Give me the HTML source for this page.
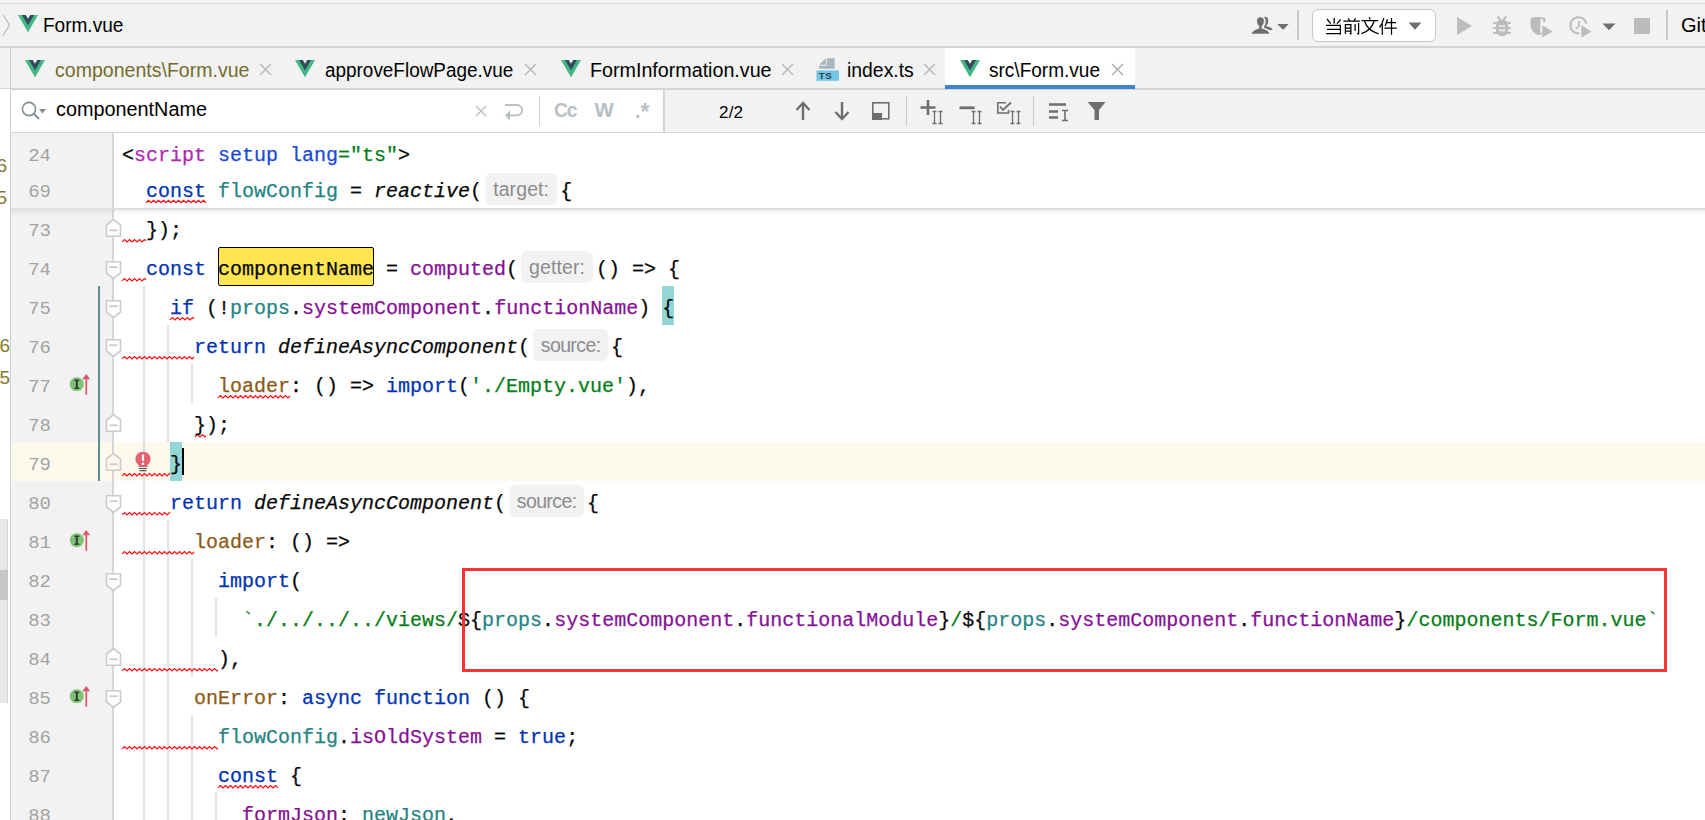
<!DOCTYPE html><html><head><meta charset="utf-8"><style>
*{margin:0;padding:0;box-sizing:border-box}
html,body{width:1705px;height:820px;overflow:hidden;background:#fff}
body{position:relative;font-family:"Liberation Sans",sans-serif}
.abs{position:absolute}
.ui{position:absolute;font-family:"Liberation Sans",sans-serif;font-size:19px;color:#000;white-space:pre;line-height:22px}
.cl{position:absolute;left:122px;height:39px;line-height:39px;font-family:"Liberation Mono",monospace;font-size:20px;white-space:pre;color:#080808;padding-top:3px;-webkit-text-stroke:0.25px currentColor}
.ln{position:absolute;left:12px;width:39px;text-align:right;height:39px;line-height:39px;font-family:"Liberation Mono",monospace;font-size:19px;color:#a3a3a3;padding-top:3.5px}
.hint{display:inline-block;width:78px;height:39px;vertical-align:top;position:relative}
.hint span{position:absolute;left:3px;right:3px;top:1px;height:32px;line-height:32px;border-radius:6px;background:#f2f2f2;color:#8c8c8c;font-family:"Liberation Sans",sans-serif;font-size:19.5px;text-align:center;letter-spacing:0.1px;-webkit-text-stroke:0}
</style></head><body><div class="abs" style="left:0;top:0;width:1705px;height:133px;background:#f2f2f2"></div>
<div class="abs" style="left:0;top:3px;width:1705px;height:1px;background:#dadada"></div>
<div class="abs" style="left:0;top:46px;width:1705px;height:2px;background:#d4d4d4"></div>
<div class="abs" style="left:0;top:88px;width:1705px;height:2px;background:#d4d4d4"></div>
<div class="abs" style="left:11px;top:90px;width:653px;height:42px;background:#fff"></div>
<div class="abs" style="left:663px;top:90px;width:2px;height:42px;background:#d4d4d4"></div>
<div class="abs" style="left:0;top:132px;width:1705px;height:1px;background:#d4d4d4"></div>
<div class="abs" style="left:10px;top:47px;width:1px;height:773px;background:#cfcfcf"></div>
<div class="abs" style="left:11px;top:133px;width:101px;height:687px;background:#f2f2f2"></div>
<div class="abs" style="left:11px;top:442px;width:1694px;height:39px;background:#fcfaed"></div>
<div class="abs" style="left:112px;top:133px;width:2px;height:687px;background:#d6d6d6"></div>
<div class="abs" style="left:11px;top:208px;width:1694px;height:2px;background:#dedede"></div>
<div class="abs" style="left:143px;top:286px;width:2px;height:534px;background:#e2e2e2"></div>
<div class="abs" style="left:167px;top:325px;width:2px;height:117px;background:#e2e2e2"></div>
<div class="abs" style="left:167px;top:520px;width:2px;height:300px;background:#e2e2e2"></div>
<div class="abs" style="left:191px;top:364px;width:2px;height:39px;background:#e2e2e2"></div>
<div class="abs" style="left:191px;top:559px;width:2px;height:117px;background:#e2e2e2"></div>
<div class="abs" style="left:191px;top:715px;width:2px;height:105px;background:#e2e2e2"></div>
<div class="abs" style="left:215px;top:598px;width:2px;height:39px;background:#e2e2e2"></div>
<div class="abs" style="left:215px;top:793px;width:2px;height:27px;background:#e2e2e2"></div>
<div class="abs" style="left:98px;top:286px;width:2px;height:195px;background:#5b8f8f"></div>
<svg class="abs" style="left:105px;top:217.8px" width="17" height="19" viewBox="0 0 17 19"><path d="M1.5 18.2H15.5V7L8.5 1.5L1.5 7Z" fill="#fff" stroke="#cbcbcb" stroke-width="1.6"/><path d="M4.5 12.3H12.5" stroke="#cbcbcb" stroke-width="1.8"/></svg>
<svg class="abs" style="left:105px;top:260.7px" width="17" height="19" viewBox="0 0 17 19"><path d="M1.5 0.8H15.5V12L8.5 17.5L1.5 12Z" fill="#fff" stroke="#cbcbcb" stroke-width="1.6"/><path d="M4.5 6.2H12.5" stroke="#cbcbcb" stroke-width="1.8"/></svg>
<svg class="abs" style="left:105px;top:299.7px" width="17" height="19" viewBox="0 0 17 19"><path d="M1.5 0.8H15.5V12L8.5 17.5L1.5 12Z" fill="#fff" stroke="#cbcbcb" stroke-width="1.6"/><path d="M4.5 6.2H12.5" stroke="#cbcbcb" stroke-width="1.8"/></svg>
<svg class="abs" style="left:105px;top:338.7px" width="17" height="19" viewBox="0 0 17 19"><path d="M1.5 0.8H15.5V12L8.5 17.5L1.5 12Z" fill="#fff" stroke="#cbcbcb" stroke-width="1.6"/><path d="M4.5 6.2H12.5" stroke="#cbcbcb" stroke-width="1.8"/></svg>
<svg class="abs" style="left:105px;top:412.8px" width="17" height="19" viewBox="0 0 17 19"><path d="M1.5 18.2H15.5V7L8.5 1.5L1.5 7Z" fill="#fff" stroke="#cbcbcb" stroke-width="1.6"/><path d="M4.5 12.3H12.5" stroke="#cbcbcb" stroke-width="1.8"/></svg>
<svg class="abs" style="left:105px;top:451.8px" width="17" height="19" viewBox="0 0 17 19"><path d="M1.5 18.2H15.5V7L8.5 1.5L1.5 7Z" fill="#fcfaed" stroke="#cbcbcb" stroke-width="1.6"/><path d="M4.5 12.3H12.5" stroke="#cbcbcb" stroke-width="1.8"/></svg>
<svg class="abs" style="left:105px;top:494.7px" width="17" height="19" viewBox="0 0 17 19"><path d="M1.5 0.8H15.5V12L8.5 17.5L1.5 12Z" fill="#fff" stroke="#cbcbcb" stroke-width="1.6"/><path d="M4.5 6.2H12.5" stroke="#cbcbcb" stroke-width="1.8"/></svg>
<svg class="abs" style="left:105px;top:572.7px" width="17" height="19" viewBox="0 0 17 19"><path d="M1.5 0.8H15.5V12L8.5 17.5L1.5 12Z" fill="#fff" stroke="#cbcbcb" stroke-width="1.6"/><path d="M4.5 6.2H12.5" stroke="#cbcbcb" stroke-width="1.8"/></svg>
<svg class="abs" style="left:105px;top:646.8px" width="17" height="19" viewBox="0 0 17 19"><path d="M1.5 18.2H15.5V7L8.5 1.5L1.5 7Z" fill="#fff" stroke="#cbcbcb" stroke-width="1.6"/><path d="M4.5 12.3H12.5" stroke="#cbcbcb" stroke-width="1.8"/></svg>
<svg class="abs" style="left:105px;top:689.7px" width="17" height="19" viewBox="0 0 17 19"><path d="M1.5 0.8H15.5V12L8.5 17.5L1.5 12Z" fill="#fff" stroke="#cbcbcb" stroke-width="1.6"/><path d="M4.5 6.2H12.5" stroke="#cbcbcb" stroke-width="1.8"/></svg>
<svg class="abs" style="left:68px;top:373px" width="26" height="24" viewBox="0 0 26 24"><circle cx="8.8" cy="11.2" r="7" fill="#80c377"/><path d="M6.3 7.3H11.3M6.3 15.2H11.3" stroke="#344434" stroke-width="1.6"/><path d="M8.8 7.3V15.2" stroke="#344434" stroke-width="2.2"/><path d="M18.3 21.8V5" stroke="#de5763" stroke-width="1.7"/><path d="M14.4 6.2L18.3 1L22.2 6.2Z" fill="#de5763"/></svg>
<svg class="abs" style="left:68px;top:529px" width="26" height="24" viewBox="0 0 26 24"><circle cx="8.8" cy="11.2" r="7" fill="#80c377"/><path d="M6.3 7.3H11.3M6.3 15.2H11.3" stroke="#344434" stroke-width="1.6"/><path d="M8.8 7.3V15.2" stroke="#344434" stroke-width="2.2"/><path d="M18.3 21.8V5" stroke="#de5763" stroke-width="1.7"/><path d="M14.4 6.2L18.3 1L22.2 6.2Z" fill="#de5763"/></svg>
<svg class="abs" style="left:68px;top:685px" width="26" height="24" viewBox="0 0 26 24"><circle cx="8.8" cy="11.2" r="7" fill="#80c377"/><path d="M6.3 7.3H11.3M6.3 15.2H11.3" stroke="#344434" stroke-width="1.6"/><path d="M8.8 7.3V15.2" stroke="#344434" stroke-width="2.2"/><path d="M18.3 21.8V5" stroke="#de5763" stroke-width="1.7"/><path d="M14.4 6.2L18.3 1L22.2 6.2Z" fill="#de5763"/></svg>
<svg class="abs" style="left:0;top:0;overflow:visible" width="1" height="1"><polyline points="146.00,202.70 148.50,200.30 151.00,202.70 153.50,200.30 156.00,202.70 158.50,200.30 161.00,202.70 163.50,200.30 166.00,202.70 168.50,200.30 171.00,202.70 173.50,200.30 176.00,202.70 178.50,200.30 181.00,202.70 183.50,200.30 186.00,202.70 188.50,200.30 191.00,202.70 193.50,200.30 196.00,202.70 198.50,200.30 201.00,202.70 203.50,200.30 206.00,202.70" fill="none" stroke="#ff0d0d" stroke-width="1.2"/></svg>
<svg class="abs" style="left:0;top:0;overflow:visible" width="1" height="1"><polyline points="122.00,241.90 124.50,239.50 127.00,241.90 129.50,239.50 132.00,241.90 134.50,239.50 137.00,241.90 139.50,239.50 142.00,241.90 144.50,239.50 146.00,240.94" fill="none" stroke="#ff0d0d" stroke-width="1.2"/></svg>
<svg class="abs" style="left:0;top:0;overflow:visible" width="1" height="1"><polyline points="122.00,280.90 124.50,278.50 127.00,280.90 129.50,278.50 132.00,280.90 134.50,278.50 137.00,280.90 139.50,278.50 142.00,280.90 144.50,278.50 146.00,279.94" fill="none" stroke="#ff0d0d" stroke-width="1.2"/></svg>
<svg class="abs" style="left:0;top:0;overflow:visible" width="1" height="1"><polyline points="170.00,319.90 172.50,317.50 175.00,319.90 177.50,317.50 180.00,319.90 182.50,317.50 185.00,319.90 187.50,317.50 190.00,319.90 192.50,317.50 194.00,318.94" fill="none" stroke="#ff0d0d" stroke-width="1.2"/></svg>
<svg class="abs" style="left:0;top:0;overflow:visible" width="1" height="1"><polyline points="122.00,358.90 124.50,356.50 127.00,358.90 129.50,356.50 132.00,358.90 134.50,356.50 137.00,358.90 139.50,356.50 142.00,358.90 144.50,356.50 147.00,358.90 149.50,356.50 152.00,358.90 154.50,356.50 157.00,358.90 159.50,356.50 162.00,358.90 164.50,356.50 167.00,358.90 169.50,356.50 172.00,358.90 174.50,356.50 177.00,358.90 179.50,356.50 182.00,358.90 184.50,356.50 187.00,358.90 189.50,356.50 192.00,358.90 194.00,356.98" fill="none" stroke="#ff0d0d" stroke-width="1.2"/></svg>
<svg class="abs" style="left:0;top:0;overflow:visible" width="1" height="1"><polyline points="218.00,397.90 220.50,395.50 223.00,397.90 225.50,395.50 228.00,397.90 230.50,395.50 233.00,397.90 235.50,395.50 238.00,397.90 240.50,395.50 243.00,397.90 245.50,395.50 248.00,397.90 250.50,395.50 253.00,397.90 255.50,395.50 258.00,397.90 260.50,395.50 263.00,397.90 265.50,395.50 268.00,397.90 270.50,395.50 273.00,397.90 275.50,395.50 278.00,397.90 280.50,395.50 283.00,397.90 285.50,395.50 288.00,397.90 290.00,395.98" fill="none" stroke="#ff0d0d" stroke-width="1.2"/></svg>
<svg class="abs" style="left:0;top:0;overflow:visible" width="1" height="1"><polyline points="195.00,436.90 197.50,434.50 200.00,436.90 202.50,434.50 205.00,436.90 206.00,435.94" fill="none" stroke="#ff0d0d" stroke-width="1.2"/></svg>
<svg class="abs" style="left:0;top:0;overflow:visible" width="1" height="1"><polyline points="122.00,475.90 124.50,473.50 127.00,475.90 129.50,473.50 132.00,475.90 134.50,473.50 137.00,475.90 139.50,473.50 142.00,475.90 144.50,473.50 147.00,475.90 149.50,473.50 152.00,475.90 154.50,473.50 157.00,475.90 159.50,473.50 162.00,475.90 164.50,473.50 167.00,475.90 169.50,473.50 170.00,473.98" fill="none" stroke="#ff0d0d" stroke-width="1.2"/></svg>
<svg class="abs" style="left:0;top:0;overflow:visible" width="1" height="1"><polyline points="122.00,514.90 124.50,512.50 127.00,514.90 129.50,512.50 132.00,514.90 134.50,512.50 137.00,514.90 139.50,512.50 142.00,514.90 144.50,512.50 147.00,514.90 149.50,512.50 152.00,514.90 154.50,512.50 157.00,514.90 159.50,512.50 162.00,514.90 164.50,512.50 167.00,514.90 169.50,512.50 170.00,512.98" fill="none" stroke="#ff0d0d" stroke-width="1.2"/></svg>
<svg class="abs" style="left:0;top:0;overflow:visible" width="1" height="1"><polyline points="122.00,553.90 124.50,551.50 127.00,553.90 129.50,551.50 132.00,553.90 134.50,551.50 137.00,553.90 139.50,551.50 142.00,553.90 144.50,551.50 147.00,553.90 149.50,551.50 152.00,553.90 154.50,551.50 157.00,553.90 159.50,551.50 162.00,553.90 164.50,551.50 167.00,553.90 169.50,551.50 172.00,553.90 174.50,551.50 177.00,553.90 179.50,551.50 182.00,553.90 184.50,551.50 187.00,553.90 189.50,551.50 192.00,553.90 194.00,551.98" fill="none" stroke="#ff0d0d" stroke-width="1.2"/></svg>
<svg class="abs" style="left:0;top:0;overflow:visible" width="1" height="1"><polyline points="122.00,670.90 124.50,668.50 127.00,670.90 129.50,668.50 132.00,670.90 134.50,668.50 137.00,670.90 139.50,668.50 142.00,670.90 144.50,668.50 147.00,670.90 149.50,668.50 152.00,670.90 154.50,668.50 157.00,670.90 159.50,668.50 162.00,670.90 164.50,668.50 167.00,670.90 169.50,668.50 172.00,670.90 174.50,668.50 177.00,670.90 179.50,668.50 182.00,670.90 184.50,668.50 187.00,670.90 189.50,668.50 192.00,670.90 194.50,668.50 197.00,670.90 199.50,668.50 202.00,670.90 204.50,668.50 207.00,670.90 209.50,668.50 212.00,670.90 214.50,668.50 217.00,670.90 218.00,669.94" fill="none" stroke="#ff0d0d" stroke-width="1.2"/></svg>
<svg class="abs" style="left:0;top:0;overflow:visible" width="1" height="1"><polyline points="122.00,748.90 124.50,746.50 127.00,748.90 129.50,746.50 132.00,748.90 134.50,746.50 137.00,748.90 139.50,746.50 142.00,748.90 144.50,746.50 147.00,748.90 149.50,746.50 152.00,748.90 154.50,746.50 157.00,748.90 159.50,746.50 162.00,748.90 164.50,746.50 167.00,748.90 169.50,746.50 172.00,748.90 174.50,746.50 177.00,748.90 179.50,746.50 182.00,748.90 184.50,746.50 187.00,748.90 189.50,746.50 192.00,748.90 194.50,746.50 197.00,748.90 199.50,746.50 202.00,748.90 204.50,746.50 207.00,748.90 209.50,746.50 212.00,748.90 214.50,746.50 217.00,748.90 218.00,747.94" fill="none" stroke="#ff0d0d" stroke-width="1.2"/></svg>
<svg class="abs" style="left:0;top:0;overflow:visible" width="1" height="1"><polyline points="218.00,787.90 220.50,785.50 223.00,787.90 225.50,785.50 228.00,787.90 230.50,785.50 233.00,787.90 235.50,785.50 238.00,787.90 240.50,785.50 243.00,787.90 245.50,785.50 248.00,787.90 250.50,785.50 253.00,787.90 255.50,785.50 258.00,787.90 260.50,785.50 263.00,787.90 265.50,785.50 268.00,787.90 270.50,785.50 273.00,787.90 275.50,785.50 278.00,787.90" fill="none" stroke="#ff0d0d" stroke-width="1.2"/></svg>
<svg class="abs" style="left:134px;top:451px" width="18" height="23" viewBox="0 0 18 23"><path d="M9 0.8C13.5 0.8 16.6 4 16.6 8.2C16.6 11.2 14.5 13 13.3 14.5V16H4.7V14.5C3.5 13 1.4 11.2 1.4 8.2C1.4 4 4.5 0.8 9 0.8Z" fill="#e0636f"/><path d="M9 3.5V10" stroke="#fff" stroke-width="2.2"/><path d="M9 11.5V14" stroke="#fff" stroke-width="2.2"/><path d="M5 17.5H13M5.5 19.7H12.5" stroke="#555" stroke-width="1.2"/></svg>
<div class="abs" style="left:181px;top:448px;width:3px;height:27px;background:#000"></div>
<div class="abs" style="left:11px;top:210px;width:1694px;height:6px;background:linear-gradient(rgba(0,0,0,0.06),rgba(0,0,0,0))"></div>
<div class="abs" style="left:218px;top:247px;width:156px;height:39px;background:#ffe552;border:1.6px solid #000;border-radius:2px"></div>
<div class="abs" style="left:662px;top:286px;width:12px;height:39px;background:#93d6d6"></div>
<div class="abs" style="left:170px;top:442px;width:12px;height:39px;background:#93d6d6"></div>
<div class="ln" style="top:133px;padding-top:4px">24</div>
<div class="ln" style="top:169px;padding-top:4px">69</div>
<div class="ln" style="top:208px">73</div>
<div class="ln" style="top:247px">74</div>
<div class="ln" style="top:286px">75</div>
<div class="ln" style="top:325px">76</div>
<div class="ln" style="top:364px">77</div>
<div class="ln" style="top:403px">78</div>
<div class="ln" style="top:442px">79</div>
<div class="ln" style="top:481px">80</div>
<div class="ln" style="top:520px">81</div>
<div class="ln" style="top:559px">82</div>
<div class="ln" style="top:598px">83</div>
<div class="ln" style="top:637px">84</div>
<div class="ln" style="top:676px">85</div>
<div class="ln" style="top:715px">86</div>
<div class="ln" style="top:754px">87</div>
<div class="ln" style="top:793px">88</div>
<div class="cl" style="top:133px;padding-top:3px">&lt;<span style="color:#b02ab0">script</span> <span style="color:#174ad4">setup</span> <span style="color:#174ad4">lang</span><span style="color:#067d17">="ts"</span>&gt;</div>
<div class="cl" style="top:169px">  <span style="color:#0033b3">const</span> <span style="color:#248482">flowConfig</span> = <span style="font-style:italic">reactive</span>(<span class="hint" style="width:78px"><span style="letter-spacing:0.1px">target:</span></span>{</div>
<div class="cl" style="top:208px">  });</div>
<div class="cl" style="top:247px">  <span style="color:#0033b3">const</span> componentName = <span style="color:#871094">computed</span>(<span class="hint" style="width:78px"><span style="letter-spacing:0.1px">getter:</span></span>() =&gt; {</div>
<div class="cl" style="top:286px">    <span style="color:#0033b3">if</span> (!<span style="color:#248482">props</span>.<span style="color:#871094">systemComponent</span>.<span style="color:#871094">functionName</span>) {</div>
<div class="cl" style="top:325px">      <span style="color:#0033b3">return</span> <span style="font-style:italic">defineAsyncComponent</span>(<span class="hint" style="width:81px"><span style="letter-spacing:-0.6px">source:</span></span>{</div>
<div class="cl" style="top:364px">        <span style="color:#8c5a14">loader</span>: () =&gt; <span style="color:#0033b3">import</span>(<span style="color:#067d17">'./Empty.vue'</span>),</div>
<div class="cl" style="top:403px">      });</div>
<div class="cl" style="top:442px">    }</div>
<div class="cl" style="top:481px">    <span style="color:#0033b3">return</span> <span style="font-style:italic">defineAsyncComponent</span>(<span class="hint" style="width:81px"><span style="letter-spacing:-0.6px">source:</span></span>{</div>
<div class="cl" style="top:520px">      <span style="color:#8c5a14">loader</span>: () =&gt;</div>
<div class="cl" style="top:559px">        <span style="color:#0033b3">import</span>(</div>
<div class="cl" style="top:598px">          <span style="color:#067d17">`./../../../views/</span>${<span style="color:#248482">props</span>.<span style="color:#871094">systemComponent</span>.<span style="color:#871094">functionalModule</span>}<span style="color:#067d17">/</span>${<span style="color:#248482">props</span>.<span style="color:#871094">systemComponent</span>.<span style="color:#871094">functionName</span>}<span style="color:#067d17">/components/Form.vue`</span></div>
<div class="cl" style="top:637px">        ),</div>
<div class="cl" style="top:676px">      <span style="color:#8c5a14">onError</span>: <span style="color:#0033b3">async</span> <span style="color:#0033b3">function</span> () {</div>
<div class="cl" style="top:715px">        <span style="color:#248482">flowConfig</span>.<span style="color:#871094">isOldSystem</span> = <span style="color:#0033b3">true</span>;</div>
<div class="cl" style="top:754px">        <span style="color:#0033b3">const</span> {</div>
<div class="cl" style="top:793px">          <span style="color:#871094">formJson</span>: <span style="color:#248482">newJson</span>,</div>
<svg class="abs" style="left:1px;top:13px" width="10" height="24" viewBox="0 0 10 24"><path d="M2 1.5L8.5 12L2 22.5" fill="none" stroke="#b8b8b8" stroke-width="1.2"/></svg>
<svg class="abs" style="left:18px;top:15px" width="20" height="17.3" viewBox="0 0 261.76 226.69"><path fill="#41b883" d="M161.096.001l-30.225 52.351L100.647.001H-.005l130.877 226.688L261.749.001z"/><path fill="#34495e" d="M161.096.001l-30.225 52.351L100.647.001H52.346l78.526 136.01L209.398.001z"/></svg>
<div class="abs" style="left:43.3px;top:14.5px;font-size:20px;line-height:20px;height:26px;color:#000;white-space:pre;letter-spacing:0px;transform:scaleX(0.951);transform-origin:0 0;">Form.vue</div>
<div class="abs" style="left:945px;top:48px;width:190px;height:41px;background:#fff"></div>
<div class="abs" style="left:945px;top:85px;width:190px;height:4px;background:#4083c9"></div>
<svg class="abs" style="left:25px;top:60px" width="20" height="17.3" viewBox="0 0 261.76 226.69"><path fill="#41b883" d="M161.096.001l-30.225 52.351L100.647.001H-.005l130.877 226.688L261.749.001z"/><path fill="#34495e" d="M161.096.001l-30.225 52.351L100.647.001H52.346l78.526 136.01L209.398.001z"/></svg>
<div class="abs" style="left:55px;top:60px;font-size:20px;line-height:20px;height:26px;color:#736c2c;white-space:pre;letter-spacing:0px;transform:scaleX(0.977);transform-origin:0 0;">components\Form.vue</div>
<svg class="abs" style="left:259px;top:63px" width="13" height="13" viewBox="0 0 13 13"><path d="M1 1L12 12M12 1L1 12" stroke="#b4b4b4" stroke-width="1.3"/></svg>
<svg class="abs" style="left:295px;top:60px" width="20" height="17.3" viewBox="0 0 261.76 226.69"><path fill="#41b883" d="M161.096.001l-30.225 52.351L100.647.001H-.005l130.877 226.688L261.749.001z"/><path fill="#34495e" d="M161.096.001l-30.225 52.351L100.647.001H52.346l78.526 136.01L209.398.001z"/></svg>
<div class="abs" style="left:325px;top:60px;font-size:20px;line-height:20px;height:26px;color:#000;white-space:pre;letter-spacing:0px;transform:scaleX(0.946);transform-origin:0 0;">approveFlowPage.vue</div>
<svg class="abs" style="left:523.5px;top:63px" width="13" height="13" viewBox="0 0 13 13"><path d="M1 1L12 12M12 1L1 12" stroke="#b4b4b4" stroke-width="1.3"/></svg>
<svg class="abs" style="left:561px;top:60px" width="20" height="17.3" viewBox="0 0 261.76 226.69"><path fill="#41b883" d="M161.096.001l-30.225 52.351L100.647.001H-.005l130.877 226.688L261.749.001z"/><path fill="#34495e" d="M161.096.001l-30.225 52.351L100.647.001H52.346l78.526 136.01L209.398.001z"/></svg>
<div class="abs" style="left:590px;top:60px;font-size:20px;line-height:20px;height:26px;color:#000;white-space:pre;letter-spacing:0px;transform:scaleX(0.984);transform-origin:0 0;">FormInformation.vue</div>
<svg class="abs" style="left:780.5px;top:63px" width="13" height="13" viewBox="0 0 13 13"><path d="M1 1L12 12M12 1L1 12" stroke="#b4b4b4" stroke-width="1.3"/></svg>
<svg class="abs" style="left:810px;top:52px" width="35" height="35" viewBox="0 0 35 35"><path d="M16.7 6.2H24.6V16.7H9.2V13.7H16.7Z" fill="#a9b5bd"/><path d="M15.8 6.2V12.8H9.2Z" fill="#a9b5bd"/><rect x="6.4" y="18.4" width="22.6" height="10.4" fill="#73c6e6"/><text x="8.8" y="27.4" font-family="Liberation Sans" font-weight="bold" font-size="9.8" fill="#2e3f49" letter-spacing="0.4">TS</text></svg>
<div class="abs" style="left:847px;top:60px;font-size:20px;line-height:20px;height:26px;color:#000;white-space:pre;letter-spacing:0px;transform:scaleX(0.969);transform-origin:0 0;">index.ts</div>
<svg class="abs" style="left:923px;top:63px" width="13" height="13" viewBox="0 0 13 13"><path d="M1 1L12 12M12 1L1 12" stroke="#b4b4b4" stroke-width="1.3"/></svg>
<svg class="abs" style="left:960px;top:60px" width="20" height="17.3" viewBox="0 0 261.76 226.69"><path fill="#41b883" d="M161.096.001l-30.225 52.351L100.647.001H-.005l130.877 226.688L261.749.001z"/><path fill="#34495e" d="M161.096.001l-30.225 52.351L100.647.001H52.346l78.526 136.01L209.398.001z"/></svg>
<div class="abs" style="left:989px;top:60px;font-size:20px;line-height:20px;height:26px;color:#000;white-space:pre;letter-spacing:0px;transform:scaleX(0.951);transform-origin:0 0;">src\Form.vue</div>
<svg class="abs" style="left:1111px;top:63px" width="13" height="13" viewBox="0 0 13 13"><path d="M1 1L12 12M12 1L1 12" stroke="#a8a8a8" stroke-width="1.3"/></svg>
<svg class="abs" style="left:20px;top:100px" width="28" height="22" viewBox="0 0 28 22"><circle cx="9" cy="9" r="6.6" fill="none" stroke="#858f96" stroke-width="1.6"/><path d="M13.5 13.5L19 19" stroke="#858f96" stroke-width="2"/><path d="M19 9H26L22.5 13.5Z" fill="#858f96"/></svg>
<div class="abs" style="left:55.5px;top:99px;font-size:20px;line-height:20px;height:26px;color:#000;white-space:pre;letter-spacing:0px;transform:scaleX(0.991);transform-origin:0 0;">componentName</div>
<svg class="abs" style="left:475px;top:105px" width="12" height="12" viewBox="0 0 12 12"><path d="M1 1L11 11M11 1L1 11" stroke="#b9bfc3" stroke-width="1.4"/></svg>
<svg class="abs" style="left:504px;top:102px" width="20" height="19" viewBox="0 0 20 19"><path d="M1 3H13A5.2 5.2 0 0 1 13 13.4H5" fill="none" stroke="#b9bfc3" stroke-width="1.8"/><path d="M1 13.4L6 8.5V18.3Z" fill="#b9bfc3"/></svg>
<div class="abs" style="left:539px;top:96px;width:1px;height:30px;background:#d0d0d0"></div>
<div class="abs" style="left:554px;top:100px;font-size:20.5px;line-height:20.5px;height:26.5px;color:#b9c0c5;white-space:pre;letter-spacing:-1.2px;transform:scaleX(0.94);transform-origin:0 0;font-weight:bold">Cc</div>
<div class="abs" style="left:594.5px;top:100px;font-size:20.5px;line-height:20.5px;height:26.5px;color:#b9c0c5;white-space:pre;letter-spacing:0px;font-weight:bold">W</div>
<div class="abs" style="left:635px;top:101px;font-size:20px;line-height:20px;height:26px;color:#b9c0c5;white-space:pre;letter-spacing:0px;font-weight:bold">.</div>
<div class="abs" style="left:640.5px;top:101px;font-size:23px;line-height:23px;height:29px;color:#b9c0c5;white-space:pre;letter-spacing:0px;font-weight:bold">*</div>
<div class="abs" style="left:719px;top:104px;font-size:17px;line-height:17px;height:23px;color:#000;white-space:pre;letter-spacing:0.2px;">2/2</div>
<svg class="abs" style="left:794px;top:101px" width="18" height="20" viewBox="0 0 18 20"><path d="M9 3V19" stroke="#6e6e6e" stroke-width="2.4"/><path d="M2.5 9L9 2L15.5 9" fill="none" stroke="#6e6e6e" stroke-width="2.4"/></svg>
<svg class="abs" style="left:833px;top:101px" width="18" height="20" viewBox="0 0 18 20"><path d="M9 1V17" stroke="#6e6e6e" stroke-width="2.4"/><path d="M2.5 11L9 18L15.5 11" fill="none" stroke="#6e6e6e" stroke-width="2.4"/></svg>
<svg class="abs" style="left:871px;top:101px" width="20" height="20" viewBox="0 0 20 20"><rect x="1.8" y="1.8" width="16" height="16" fill="none" stroke="#6e6e6e" stroke-width="1.6"/><rect x="1" y="12" width="10" height="7" fill="#6e6e6e"/></svg>
<div class="abs" style="left:906px;top:96px;width:1px;height:30px;background:#c8c8c8"></div>
<svg class="abs" style="left:918px;top:99px" width="28" height="26" viewBox="0 0 28 26"><path d="M10 1V16M2.5 8.5H17.5" stroke="#6e6e6e" stroke-width="2.6"/><path d="M14.5 12.5H18.5M14.5 24.5H18.5M16.5 12.5V24.5M20.5 12.5H24.5M20.5 24.5H24.5M22.5 12.5V24.5" stroke="#6e6e6e" stroke-width="1.3" fill="none"/></svg>
<svg class="abs" style="left:957px;top:99px" width="28" height="26" viewBox="0 0 28 26"><path d="M2.5 8.8H17.5" stroke="#6e6e6e" stroke-width="2.8"/><path d="M14.5 12.5H18.5M14.5 24.5H18.5M16.5 12.5V24.5M20.5 12.5H24.5M20.5 24.5H24.5M22.5 12.5V24.5" stroke="#6e6e6e" stroke-width="1.3" fill="none"/></svg>
<svg class="abs" style="left:995px;top:99px" width="28" height="26" viewBox="0 0 28 26"><path d="M2.8 9V3.8H11M2.8 9V14H13.5V11" fill="none" stroke="#6e6e6e" stroke-width="1.6"/><path d="M5 7.5L8 11L16 3.5" fill="none" stroke="#6e6e6e" stroke-width="1.9"/><path d="M15.5 12.5H19.5M15.5 24.5H19.5M17.5 12.5V24.5M21.5 12.5H25.5M21.5 24.5H25.5M23.5 12.5V24.5" stroke="#6e6e6e" stroke-width="1.3" fill="none"/></svg>
<div class="abs" style="left:1033px;top:96px;width:1px;height:30px;background:#c8c8c8"></div>
<svg class="abs" style="left:1047px;top:100px" width="24" height="24" viewBox="0 0 24 24"><path d="M2 4.5H19M2 11.5H11M2 17.5H11" stroke="#6e6e6e" stroke-width="2.6"/><path d="M15 10.5H21M15 20.5H21M18 10.5V20.5" stroke="#6e6e6e" stroke-width="1.6"/></svg>
<svg class="abs" style="left:1087px;top:101px" width="20" height="20" viewBox="0 0 20 20"><path d="M0.5 1H18.5L12 9V19H7.5V9Z" fill="#6e6e6e"/></svg>
<svg class="abs" style="left:1245px;top:10px" width="50" height="30" viewBox="0 0 50 30"><path d="M18.8 6.9C21.8 6.5 23.3 8 23.3 10.5C23.3 12.5 22.7 14.5 21.4 15.6L21.5 16.2C24.7 17 27 17.8 27.5 20L24.5 19.9C23 19.1 21.2 18.5 19.3 17.9L19 16.5C20.2 14.9 20.7 12.8 20.6 10.6C20.5 9 20 7.6 18.8 6.9Z" fill="#6e6e6e"/><path d="M6.2 24.4C6.4 20.5 9.8 19.2 13.7 18L13.8 16.6C12.2 15.2 11.4 12.8 11.4 10.8C11.4 8.2 13.2 6.6 15.45 6.6C17.7 6.6 19.5 8.2 19.5 10.8C19.5 12.8 18.7 15.2 17.1 16.6L17.2 18C21.1 19.2 24.7 20.5 25.2 24.4Z" fill="#6e6e6e" stroke="#f2f2f2" stroke-width="1.1"/><path d="M32.2 14.1H43.7L38 19.8Z" fill="#6e6e6e"/></svg>
<div class="abs" style="left:1297px;top:10px;width:1.5px;height:30px;background:#c8c8c8"></div>
<div class="abs" style="left:1312px;top:9px;width:124px;height:33px;background:#fff;border:1.5px solid #c6c6c6;border-radius:6px"></div>
<svg class="abs" style="left:1324px;top:16px" width="76" height="22" viewBox="0 0 76 22"><g fill="none" stroke="#000" stroke-width="1.25"><path d="M3 3L6.7 7.7M10.2 2V7.7M16.7 3.5L12.9 7.7M2 9.4H16.4V18.7M3 13.45H16.4M2 17.5H16.4"/><path d="M24.2 2.2L25.9 5M31.6 2.2L29.9 5M19.4 5.2H35.9M21.4 17.9V8.5H26.9V17.9L25.5 17.5M21.4 12H26.9M21.4 15H26.9M31.1 8V15M34.6 7V17.9L33 17.5"/><path d="M45.1 1.2L46.3 3.5M37.4 4.5H54.3M40.6 5.2C42.5 11.5 47 15.5 54.6 17.9M50.1 5.2C48.2 11.5 44 15.5 37.4 17.7"/><path d="M59.8 2.2C59 5.5 57.5 9 55.6 11.5M58.3 7.7V18.7M63.5 3.2L61.1 10M62.5 6.5H72M60.3 12.2H72.8M67.5 2V18.7"/></g></svg>
<svg class="abs" style="left:1407px;top:21px" width="16" height="10" viewBox="0 0 16 10"><path d="M1.5 1.5H14.5L8 8.8Z" fill="#6e6e6e"/></svg>
<svg class="abs" style="left:1456px;top:16px" width="18" height="20" viewBox="0 0 18 20"><path d="M1 1L16 10L1 19Z" fill="#bcbcbc"/></svg>
<svg class="abs" style="left:1485px;top:10px" width="115" height="32" viewBox="0 0 115 32"><g fill="#bcbcbc" stroke="none"><path d="M11 15.5A6.15 6.15 0 0 1 23.3 15.5V20.15A6.15 6.15 0 0 1 11 20.15Z"/><rect x="8" y="12.1" width="18" height="1.8"/><rect x="8" y="17.2" width="18" height="1.8"/><rect x="8" y="21.9" width="18" height="2"/></g><path d="M12.5 6.4L15 9.5M21.2 6.4L18.7 9.5" stroke="#bcbcbc" stroke-width="2"/><path d="M13.8 16H20.2M13.8 20.4H20.2" stroke="#f2f2f2" stroke-width="1.7"/><path d="M45.5 8.2Q52.5 5.6 60.4 8.2V12.3H58.2V9.6Q55.8 8.9 55.3 8.9V23.5L56.8 22.3V24.3L53.3 25.2Q45.5 22 45.5 14Z" fill="#bcbcbc"/><path d="M57.3 15.2L67.8 21.4L57.3 27.6Z" fill="#bcbcbc"/><path d="M94.4 23.3A8.1 8.1 0 1 1 101.4 13.8" fill="none" stroke="#bcbcbc" stroke-width="2"/><path d="M93.9 11V16.2L91 19" fill="none" stroke="#bcbcbc" stroke-width="1.7"/><path d="M96.4 15.2L106.5 21.4L96.4 27.6Z" fill="#bcbcbc"/></svg>
<svg class="abs" style="left:1601px;top:22px" width="16" height="10" viewBox="0 0 16 10"><path d="M1.5 1.5H14.5L8 8.3Z" fill="#6e6e6e"/></svg>
<div class="abs" style="left:1634px;top:18px;width:16px;height:16px;background:#bcbcbc"></div>
<div class="abs" style="left:1666px;top:10px;width:1.5px;height:30px;background:#c8c8c8"></div>
<div class="abs" style="left:1681px;top:14.5px;font-size:20px;line-height:20px;height:26px;color:#000;white-space:pre;letter-spacing:0px;">Git</div>
<div class="abs" style="left:0;top:89px;width:10px;height:731px;background:#fff"></div>
<div class="abs" style="left:0;top:519px;width:8px;height:184px;background:#e8e8e8;border-right:1px solid #d4d4d4"></div>
<div class="abs" style="left:0;top:570px;width:8px;height:30px;background:#c6c6c6"></div>
<div class="abs" style="left:-3.5px;top:156px;font-family:Liberation Sans,sans-serif;font-size:19px;line-height:20px;color:#857a2c">6</div>
<div class="abs" style="left:-3.5px;top:188px;font-family:Liberation Sans,sans-serif;font-size:19px;line-height:20px;color:#857a2c">5</div>
<div class="abs" style="left:-0.5px;top:336px;font-family:Liberation Sans,sans-serif;font-size:19px;line-height:20px;color:#857a2c">6</div>
<div class="abs" style="left:-0.5px;top:368px;font-family:Liberation Sans,sans-serif;font-size:19px;line-height:20px;color:#857a2c">5</div>
<div class="abs" style="left:462px;top:568px;width:1205px;height:104px;border:3px solid #fc3232"></div></body></html>
